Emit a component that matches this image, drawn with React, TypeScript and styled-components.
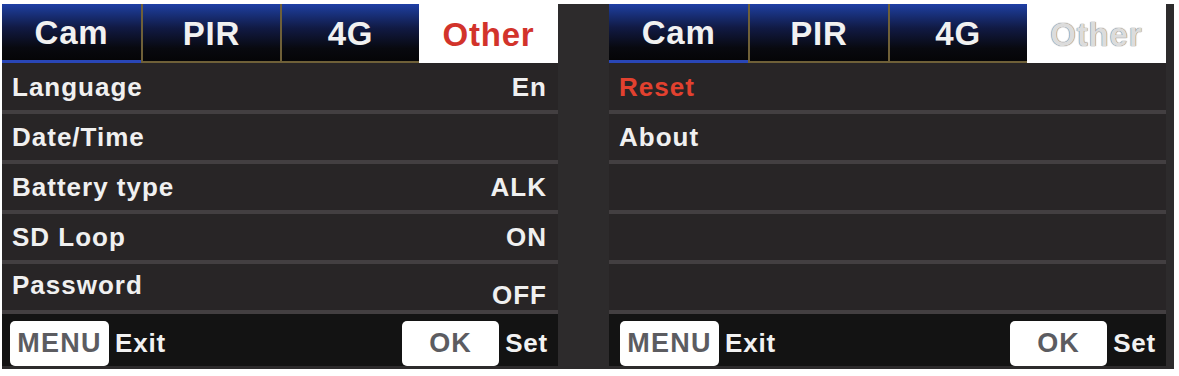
import styled, { createGlobalStyle } from "styled-components";

const GlobalStyle = createGlobalStyle`
  html, body {
    margin: 0;
    padding: 0;
    background: #ffffff;
  }
  body {
    font-family: "Liberation Sans", Arial, Helvetica, sans-serif;
    -webkit-font-smoothing: antialiased;
  }
`;

// Outer dark frame holding both screens
const Frame = styled.div`
  display: flex;
  width: 1172px;
  height: 365px;
  margin: 4px 0 0 2px;
  padding-bottom: 3px;
  box-sizing: border-box;
  background: #2d2b2c;
`;

const Gap = styled.div`
  width: 51px;
  flex: none;
`;

const Panel = styled.div<{ $width: number }>`
  width: ${({ $width }) => $width}px;
  flex: none;
  display: flex;
  flex-direction: column;
  background: #282526;
`;

const TabBar = styled.div`
  display: grid;
  grid-template-columns: repeat(4, 1fr);
  height: 59px;
  flex: none;
`;

const Tab = styled.div<{ $active?: boolean; $ghost?: boolean; $first?: boolean }>`
  display: flex;
  align-items: center;
  justify-content: center;
  box-sizing: border-box;
  padding-top: 2px;
  font-size: 33px;
  font-weight: 700;
  letter-spacing: 0.8px;
  color: #f1f1f1;
  background: linear-gradient(
    180deg,
    #1f3fa6 0%,
    #1a3587 12%,
    #111a44 42%,
    #08090f 78%,
    #050507 100%
  );
  border-left: 2px solid #6f6038;
  border-bottom: 2px solid #6f6038;

  ${({ $first }) =>
    $first &&
    `
    border-left: none;
    border-bottom: 3px solid #2946b6;
  `}

  ${({ $active }) =>
    $active &&
    `
    background: #ffffff;
    color: #d2332b;
    border: none;
  `}

  ${({ $ghost }) =>
    $ghost &&
    `
    color: #dcdcdc;
    text-shadow: 0 0 1px #777, 0 0 1px #777;
  `}
`;

const RowList = styled.div`
  display: flex;
  flex-direction: column;
  flex: none;
  padding-top: 1px;
`;

const Row = styled.div`
  display: flex;
  align-items: center;
  justify-content: space-between;
  height: 50px;
  box-sizing: border-box;
  padding: 0 11px 0 10px;
  border-bottom: 4px solid #433f41;
  font-size: 26px;
  font-weight: 700;
  letter-spacing: 1px;
  color: #f0f0f0;
`;

const Label = styled.span<{ $red?: boolean; $lift?: boolean }>`
  color: ${({ $red }) => ($red ? "#e2412f" : "#f0f0f0")};
  margin-top: ${({ $lift }) => ($lift ? "-4px" : "0")};
`;

const Value = styled.span<{ $drop?: boolean }>`
  letter-spacing: 1px;
  margin-top: ${({ $drop }) => ($drop ? "16px" : "0")};
`;

const Footer = styled.div<{ $inset: number }>`
  flex: 1;
  display: flex;
  align-items: flex-end;
  padding: 0 10px 0 ${({ $inset }) => $inset}px;
  background: #131313;
`;

const KeyButton = styled.div<{ $width: number }>`
  width: ${({ $width }) => $width}px;
  height: 45px;
  box-sizing: border-box;
  display: flex;
  align-items: center;
  justify-content: center;
  background: #ffffff;
  border-radius: 5px;
  font-size: 27px;
  font-weight: 700;
  color: #5c5c61;
  letter-spacing: 1.2px;
`;

const KeyText = styled.span`
  height: 45px;
  display: flex;
  align-items: center;
  margin-left: 6px;
  font-size: 26px;
  font-weight: 700;
  letter-spacing: 0.8px;
  color: #f2f2f2;
`;

const Spacer = styled.div`
  flex: 1;
`;

type Item = { label: string; value?: string; red?: boolean };

const leftItems: Item[] = [
  { label: "Language", value: "En" },
  { label: "Date/Time" },
  { label: "Battery type", value: "ALK" },
  { label: "SD Loop", value: "ON" },
  { label: "Password", value: "OFF" },
];

const rightItems: Item[] = [
  { label: "Reset", red: true },
  { label: "About" },
  { label: "" },
  { label: "" },
  { label: "" },
];

const tabs = ["Cam", "PIR", "4G", "Other"];

const Screen = ({
  items,
  width,
  inset,
  ghost,
}: {
  items: Item[];
  width: number;
  inset: number;
  ghost?: boolean;
}) => (
  <Panel $width={width}>
    <TabBar>
      {tabs.map((t, i) => (
        <Tab key={t} $first={i === 0} $active={i === 3} $ghost={ghost && i === 3}>
          {t}
        </Tab>
      ))}
    </TabBar>
    <RowList>
      {items.map((item, i) => (
        <Row key={i}>
          <Label $red={item.red} $lift={item.label === "Password"}>
            {item.label}
          </Label>
          {item.value && <Value $drop={item.label === "Password"}>{item.value}</Value>}
        </Row>
      ))}
    </RowList>
    <Footer $inset={inset}>
      <KeyButton $width={99}>MENU</KeyButton>
      <KeyText>Exit</KeyText>
      <Spacer />
      <KeyButton $width={97}>OK</KeyButton>
      <KeyText>Set</KeyText>
    </Footer>
  </Panel>
);

export default function App() {
  return (
    <>
      <GlobalStyle />
      <Frame>
        <Screen items={leftItems} width={556} inset={8} />
        <Gap />
        <Screen items={rightItems} width={557} inset={11} ghost />
      </Frame>
    </>
  );
}
